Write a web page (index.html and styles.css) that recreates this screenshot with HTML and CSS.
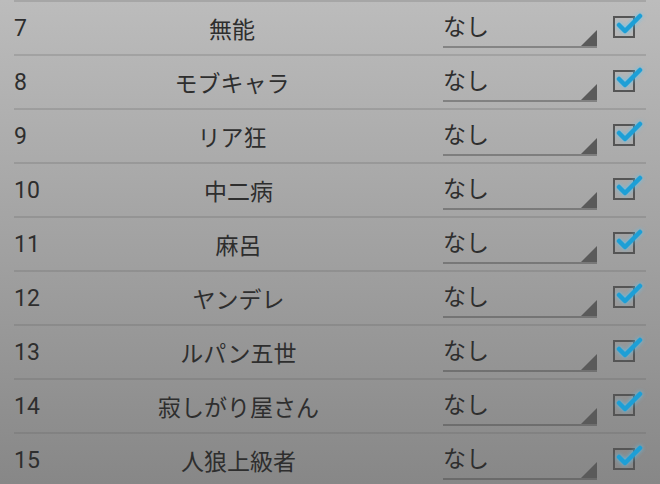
FILE: index.html
```html
<!DOCTYPE html>
<html lang="ja">
<head>
<meta charset="utf-8">
<link rel="stylesheet" href="styles.css">
</head>
<body>
<div class="list">
  <div class="row"><span class="num">7</span><span class="name">無能</span><div class="spinner"><span>なし</span><i class="tri"></i></div><span class="cb"><svg viewBox="0 0 30 26"><path d="M4 11 L10 17 L25 2"/></svg></span></div>
  <div class="row"><span class="num">8</span><span class="name">モブキャラ</span><div class="spinner"><span>なし</span><i class="tri"></i></div><span class="cb"><svg viewBox="0 0 30 26"><path d="M4 11 L10 17 L25 2"/></svg></span></div>
  <div class="row"><span class="num">9</span><span class="name">リア狂</span><div class="spinner"><span>なし</span><i class="tri"></i></div><span class="cb"><svg viewBox="0 0 30 26"><path d="M4 11 L10 17 L25 2"/></svg></span></div>
  <div class="row"><span class="num">10</span><span class="name">中二病</span><div class="spinner"><span>なし</span><i class="tri"></i></div><span class="cb"><svg viewBox="0 0 30 26"><path d="M4 11 L10 17 L25 2"/></svg></span></div>
  <div class="row"><span class="num">11</span><span class="name">麻呂</span><div class="spinner"><span>なし</span><i class="tri"></i></div><span class="cb"><svg viewBox="0 0 30 26"><path d="M4 11 L10 17 L25 2"/></svg></span></div>
  <div class="row"><span class="num">12</span><span class="name">ヤンデレ</span><div class="spinner"><span>なし</span><i class="tri"></i></div><span class="cb"><svg viewBox="0 0 30 26"><path d="M4 11 L10 17 L25 2"/></svg></span></div>
  <div class="row"><span class="num">13</span><span class="name">ルパン五世</span><div class="spinner"><span>なし</span><i class="tri"></i></div><span class="cb"><svg viewBox="0 0 30 26"><path d="M4 11 L10 17 L25 2"/></svg></span></div>
  <div class="row"><span class="num">14</span><span class="name">寂しがり屋さん</span><div class="spinner"><span>なし</span><i class="tri"></i></div><span class="cb"><svg viewBox="0 0 30 26"><path d="M4 11 L10 17 L25 2"/></svg></span></div>
  <div class="row"><span class="num">15</span><span class="name">人狼上級者</span><div class="spinner"><span>なし</span><i class="tri"></i></div><span class="cb"><svg viewBox="0 0 30 26"><path d="M4 11 L10 17 L25 2"/></svg></span></div>
</div>
</body>
</html>
```
FILE: styles.css
```css
html, body {
  margin: 0;
  padding: 0;
  height: 100%;
  overflow: hidden;
}
body {
  background: linear-gradient(to bottom, #bcbcbc 0%, #a2a2a2 50%, #878787 100%);
  font-family: Roboto, "Noto Sans CJK JP", sans-serif;
  color: #2e2e2e;
}
.list {
  display: flex;
  flex-direction: column;
  padding-left: 14px;
  padding-right: 14px;
}
.row {
  display: flex;
  align-items: center;
  height: 52px;
  padding-right: 11px;
  border-top: 2px solid rgba(90, 90, 90, 0.22);
}
.num {
  font-size: 23px;
  flex: none;
}
.name {
  flex: 1;
  text-align: center;
  font-size: 23px;
  font-family: "Noto Sans CJK JP", sans-serif;
}
.spinner {
  flex: none;
  margin-left: 6px;
  width: 154px;
  height: 46px;
  align-self: flex-start;
  box-sizing: border-box;
  border-bottom: 2px solid rgba(70, 70, 70, 0.45);
  position: relative;
  display: flex;
  align-items: center;
  font-family: "Noto Sans CJK JP", sans-serif;
  font-size: 23px;
  padding-top: 2px;
}
.tri {
  position: absolute;
  right: 0;
  bottom: 0;
  width: 0;
  height: 0;
  border-left: 16px solid transparent;
  border-bottom: 16px solid #5a5a5a;
}
.cb {
  flex: none;
  margin-left: 16px;
  width: 22px;
  height: 22px;
  box-sizing: border-box;
  border: 2px solid #555;
  position: relative;
  margin-top: -3px;
}
.cb svg {
  position: absolute;
  left: 0;
  top: -4px;
  width: 30px;
  height: 26px;
  overflow: visible;
  fill: none;
  stroke: #1d9fd6;
  stroke-width: 4.5;
  stroke-linecap: round;
  stroke-linejoin: round;
  filter: drop-shadow(0 0 2px rgba(80, 200, 255, 0.8));
}
```
